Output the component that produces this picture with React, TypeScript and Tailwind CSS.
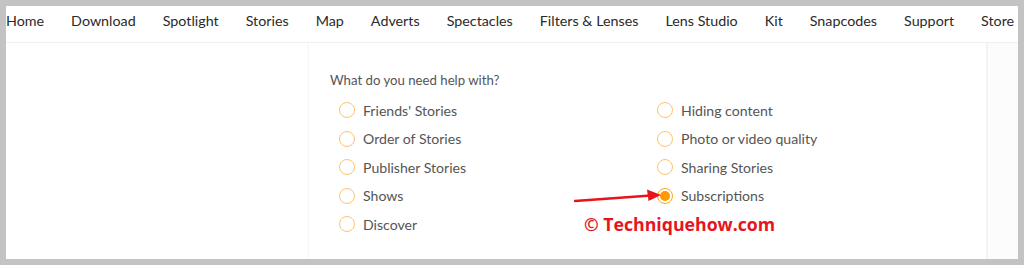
import React from "react";

const navItems = [
  "Home",
  "Download",
  "Spotlight",
  "Stories",
  "Map",
  "Adverts",
  "Spectacles",
  "Filters & Lenses",
  "Lens Studio",
  "Kit",
  "Snapcodes",
  "Support",
  "Store",
];

const leftOptions = ["Friends' Stories", "Order of Stories", "Publisher Stories", "Shows", "Discover"];
const rightOptions = ["Hiding content", "Photo or video quality", "Sharing Stories", "Subscriptions"];

function Radio({ label, checked }: { label: string; checked?: boolean }) {
  return (
    <label className="flex items-center h-[28.5px] gap-[8px] text-[14.1px] text-[#555]">
      {checked ? (
        <span className="w-[16px] h-[16px] rounded-full border-[1.5px] border-[#ffa51f] flex items-center justify-center">
          <span className="w-[10px] h-[10px] rounded-full bg-[#ff9900]" />
        </span>
      ) : (
        <span className="w-[16px] h-[16px] rounded-full border-[1.5px] border-[#fdc46e]" />
      )}
      <span>{label}</span>
    </label>
  );
}

export default function App() {
  return (
    <div className="h-[265px] w-[1024px] bg-[#c3c3c3] p-[6px] overflow-hidden" style={{ fontFamily: "Lato, 'Noto Sans', sans-serif" }}>
      <div className="h-full bg-white flex flex-col">
        {/* Nav */}
        <nav className="h-[37px] pb-[6px] border-b border-[#f0f0f0] flex items-center gap-[27px] whitespace-nowrap overflow-hidden text-[14.3px] text-[#2a2a2a] shrink-0">
          {navItems.map((item) => (
            <a key={item} href="#">
              {item}
            </a>
          ))}
        </nav>

        {/* Body */}
        <div className="flex flex-1">
          <div className="w-[301px] shrink-0 bg-white" />
          <div className="w-[2px] bg-gradient-to-r from-white to-[#f3f3f3]" />
          <div className="relative w-[678px] bg-white pl-[21px] pt-[27px] border-r border-[#f2f2f2]">
            <p className="text-[13.2px] text-[#555] leading-[20px]">What do you need help with?</p>
            <div className="grid grid-cols-[318px_1fr] mt-[6px] pl-[9px]">
              <div className="flex flex-col">
                {leftOptions.map((o) => (
                  <Radio key={o} label={o} />
                ))}
              </div>
              <div className="flex flex-col">
                {rightOptions.map((o) => (
                  <Radio key={o} label={o} checked={o === "Subscriptions"} />
                ))}
              </div>
            </div>

            {/* annotation arrow */}
            <svg className="absolute left-[264px] top-[143px]" width="90" height="20" viewBox="0 0 90 20">
              <line x1="2" y1="15" x2="78" y2="9.5" stroke="#e8141c" strokeWidth="2.4" strokeLinecap="round" />
              <polygon points="88,9 74,3.5 75.5,15" fill="#e8141c" />
            </svg>
            <div className="absolute left-[275px] top-[168px] text-[17.7px] font-bold text-[#e8141c]" style={{ fontFamily: "'Open Sans', sans-serif" }}>
              © Techniquehow.com
            </div>
          </div>
          <div className="flex-1 bg-[#fcfcfc] border-l border-[#f4f4f4]" />
        </div>
      </div>
    </div>
  );
}
